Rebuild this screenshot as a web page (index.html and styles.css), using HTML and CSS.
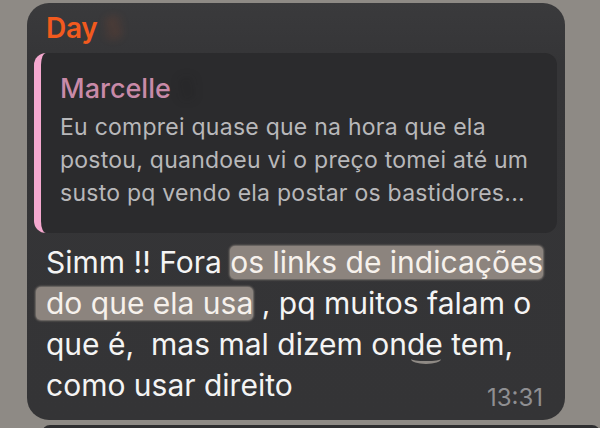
FILE: index.html
```html
<!DOCTYPE html>
<html>
<head>
<meta charset="utf-8">
<link rel="stylesheet" href="styles.css">
</head>
<body>
<div class="chat">
  <div class="bubble">
    <div class="sender">Day <span class="blur-orange">S</span></div>
    <div class="quote">
      <div class="quote-name">Marcelle <span class="blur-dark">S</span></div>
      <div class="quote-text">Eu comprei quase que na hora que ela<br>postou, quandoeu vi o preço tomei até um<br>susto pq vendo ela postar os bastidores...</div>
    </div>
    <div class="msg">Simm !! Fora <span class="hl">os links de indicações</span><br><span class="hl hl2">do que ela usa</span> , pq muitos falam o<br>que é,&nbsp; mas mal dizem on<span class="sq">de</span> tem,<br>como usar direito</div>
    <div class="time">13:31</div>
  </div>
  <div class="next"></div>
</div>
</body>
</html>
```

FILE: styles.css
```css
html, body {
  margin: 0;
  padding: 0;
}
body {
  background: #8e8a85;
  width: 600px;
  height: 428px;
  overflow: hidden;
  font-family: Inter, "Liberation Sans", sans-serif;
}
.chat {
  padding-top: 3px;
}
.bubble {
  position: relative;
  margin-left: 27px;
  width: 538px;
  height: 417px;
  box-sizing: border-box;
  border-radius: 22px;
  background: linear-gradient(#3a3a3c, #353537 60px, #343436);
}
.sender {
  padding: 8px 0 0 19px;
  height: 35px;
  line-height: 34px;
  font-size: 28px;
  font-weight: 600;
  color: #f25a1e;
  letter-spacing: -0.3px;
}
.blur-orange {
  color: rgba(242, 90, 30, 0.2);
  filter: blur(4px);
}
.blur-dark {
  color: rgba(20, 20, 20, 0.3);
  filter: blur(5px);
}
.quote {
  margin: 7px 8px 0 7px;
  height: 180px;
  box-sizing: border-box;
  border-radius: 12px;
  background: #2b2b2d;
  border-left: 7px solid #f5a8cf;
  padding: 20px 10px 0 19px;
}
.quote-name {
  font-size: 27px;
  font-weight: 500;
  color: #c98aa8;
  line-height: 32px;
}
.quote-text {
  margin-top: 6px;
  font-size: 23px;
  letter-spacing: 0.25px;
  line-height: 33px;
  color: #b8b8ba;
  white-space: nowrap;
}
.msg {
  padding: 9px 0 0 19px;
  font-size: 30px;
  line-height: 41px;
  color: #f4f4f4;
  white-space: nowrap;
}
.hl {
  display: inline-block;
  line-height: 33px;
  background: #8c847e;
  border-radius: 5px;
  box-shadow: 0 0 2px 1px rgba(140, 132, 126, 0.8);
  color: #f6f1ec;
}
.hl2 {
  margin-left: -10px;
  padding-left: 10px;
}
.sq {
  position: relative;
}
.sq::after {
  content: "";
  position: absolute;
  left: 4px;
  right: 2px;
  bottom: -2px;
  height: 6px;
  border-bottom: 3px solid #8f8a85;
  border-radius: 0 0 50% 50% / 0 0 5px 5px;
}
.time {
  position: absolute;
  right: 22px;
  bottom: 8px;
  font-size: 24px;
  color: #8f8f92;
}
.next {
  margin: 5px 0 0 42px;
  height: 10px;
  background: #2e2e30;
  border-radius: 8px 8px 0 0;
}
```
